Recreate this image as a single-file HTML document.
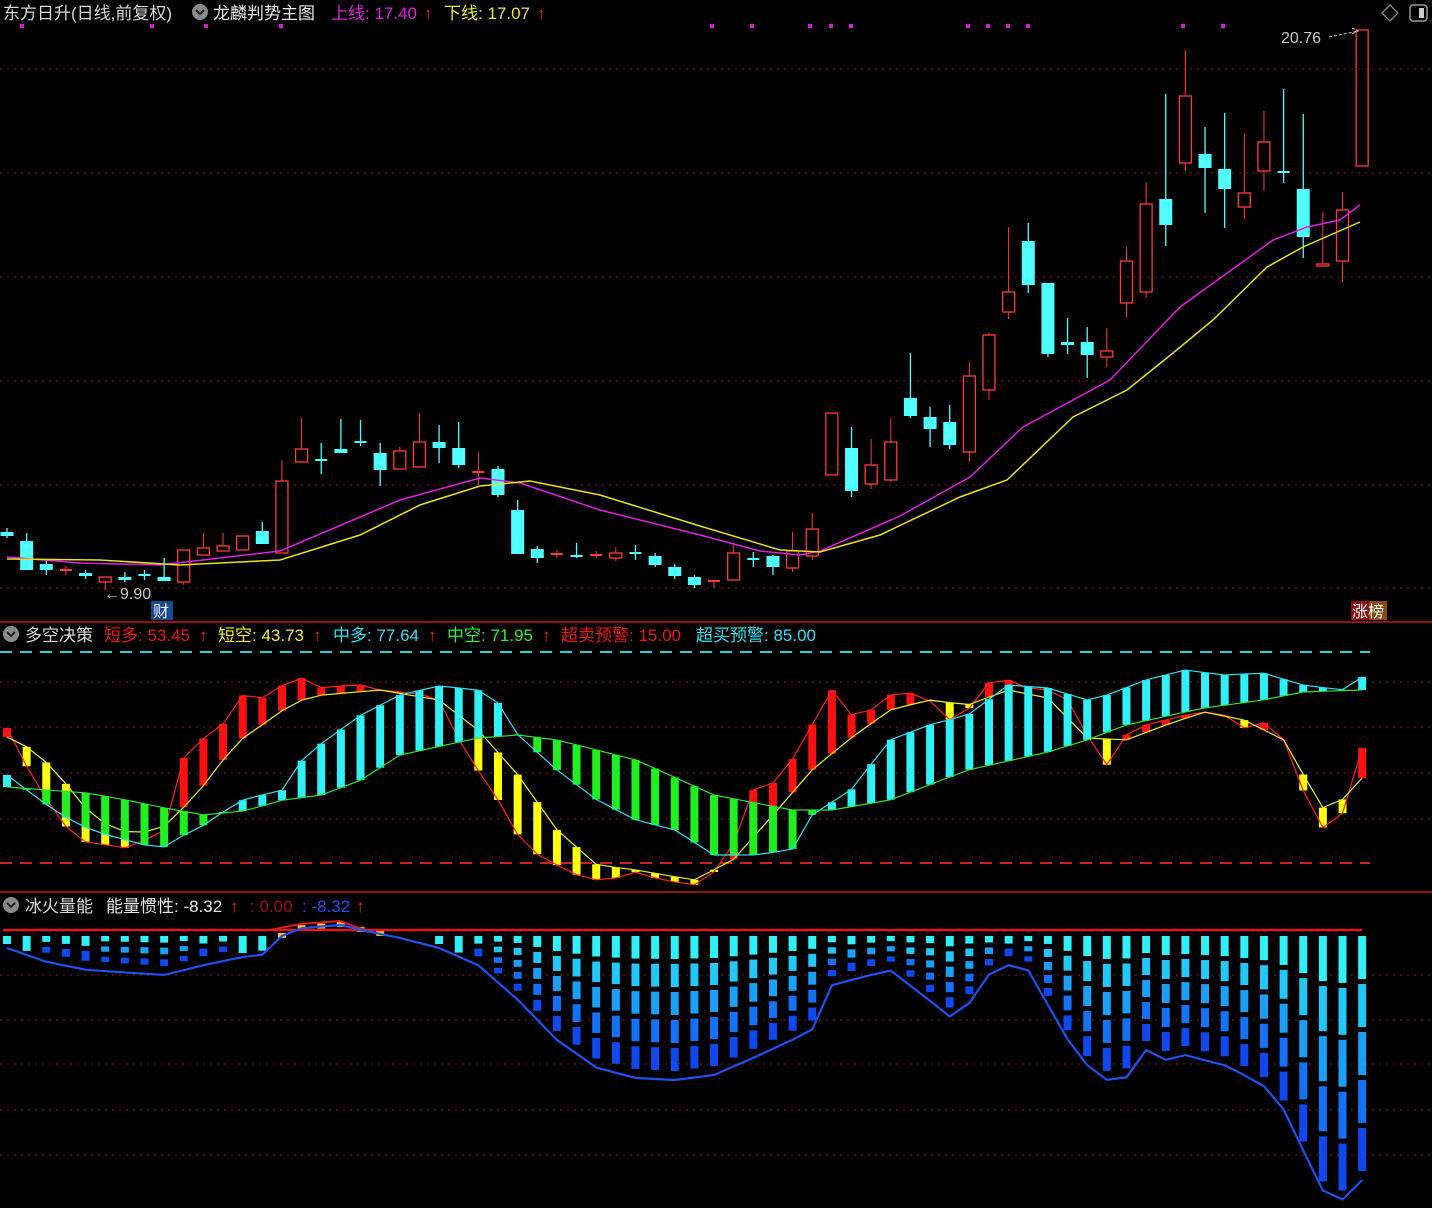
<!DOCTYPE html>
<html><head><meta charset="utf-8">
<style>
html,body{margin:0;padding:0;background:#000;width:1432px;height:1208px;overflow:hidden}
svg{display:block}
text{font-family:"Liberation Sans","Noto Sans CJK SC",sans-serif}
</style></head>
<body>
<svg id="s" width="1432" height="1208" xmlns="http://www.w3.org/2000/svg">
<rect width="1432" height="1208" fill="#000"/>
<g id="g"></g>
<text x="3" y="19" font-size="17" fill="#d8d8d8">东方日升(日线,前复权)</text>
<circle cx="200" cy="12" r="8" fill="#8a8a8a"/><path d="M196 10 L200 14 L204 10" stroke="#222" stroke-width="2" fill="none"/>
<text x="213" y="19" font-size="17" fill="#e8e8e8">龙麟判势主图</text>
<text x="331" y="19" font-size="17" fill="#e020e0">上线: 17.40</text>
<text x="424" y="19" font-size="17" fill="#ff2020">↑</text>
<text x="444" y="19" font-size="17" fill="#e8e840">下线: 17.07</text>
<text x="537" y="19" font-size="17" fill="#ff2020">↑</text>
<path d="M1390 5 L1398 13 L1390 21 L1382 13 Z" stroke="#888" stroke-width="1.3" fill="none"/>
<rect x="1410" y="5" width="17" height="16" rx="3" stroke="#999" stroke-width="1.5" fill="none"/><rect x="1419" y="8" width="5" height="10" fill="#ccc"/>
<text x="1281" y="43" font-size="16" fill="#c8c8c8">20.76</text>
<path d="M1329 37 L1358 31 M1352 28 L1358 31 L1352 34" stroke="#c8c8c8" stroke-width="1" fill="none" stroke-dasharray="3,2"/>
<text x="104" y="599" font-size="16" fill="#c8c8c8">←9.90</text>
<rect x="151" y="601" width="22" height="19" fill="#1a4a8a"/><text x="153" y="617" font-size="16" fill="#e8e8ff">财</text>
<rect x="1351" y="601" width="18" height="19" fill="#8a1010"/><rect x="1369" y="601" width="18" height="19" fill="#8a4a10"/>
<text x="1352" y="617" font-size="16" fill="#fff">涨榜</text>
<circle cx="11" cy="634" r="8" fill="#8a8a8a"/><path d="M7 632 L11 636 L15 632" stroke="#222" stroke-width="2" fill="none"/>
<text x="25" y="641" font-size="17" fill="#d8d8d8">多空决策</text>
<text x="104" y="641" font-size="17" fill="#e81818">短多: 53.45</text><text x="199" y="641" font-size="17" fill="#ff2020">↑</text>
<text x="218" y="641" font-size="17" fill="#f0f030">短空: 43.73</text><text x="313" y="641" font-size="17" fill="#ff2020">↑</text>
<text x="333" y="641" font-size="17" fill="#30e0f0">中多: 77.64</text><text x="428" y="641" font-size="17" fill="#ff2020">↑</text>
<text x="447" y="641" font-size="17" fill="#30f030">中空: 71.95</text><text x="542" y="641" font-size="17" fill="#ff2020">↑</text>
<text x="561" y="641" font-size="17" fill="#e81818">超卖预警: 15.00</text>
<text x="696" y="641" font-size="17" fill="#30e0f0">超买预警: 85.00</text>
<circle cx="11" cy="905" r="8" fill="#8a8a8a"/><path d="M7 903 L11 907 L15 903" stroke="#222" stroke-width="2" fill="none"/>
<text x="25" y="912" font-size="17" fill="#d8d8d8">冰火量能</text>
<text x="106" y="912" font-size="17" fill="#e8e8e8">能量惯性: -8.32</text>
<text x="230" y="912" font-size="17" fill="#ff2020">↑</text>
<text x="250" y="912" font-size="17" fill="#a01010">: 0.00</text>
<text x="302" y="912" font-size="17" fill="#2050f0">: -8.32</text>
<text x="356" y="912" font-size="17" fill="#ff2020">↑</text>
</svg>
<script>
(function(){
var g=document.getElementById('g'),h='';
function X(i){return 7+i*19.64;}
function interp(pts,x){for(var k=0;k<pts.length-1;k++){if(x<=pts[k+1][0]){var a=pts[k],b=pts[k+1];return a[1]+(b[1]-a[1])*(x-a[0])/(b[0]-a[0]);}}return pts[pts.length-1][1];}
function poly(pts,c,w){return '<polyline fill="none" stroke="'+c+'" stroke-width="'+(w||1)+'" points="'+pts.map(function(p){return p[0]+','+p[1]}).join(' ')+'"/>';}
[69,173,277,381,485,588].forEach(function(y){h+='<line x1="0" x2="1432" y1="'+y+'" y2="'+y+'" stroke="#8a1818" stroke-dasharray="2,5"/>';});
[682,727,773,819].forEach(function(y){h+='<line x1="0" x2="1432" y1="'+y+'" y2="'+y+'" stroke="#8a1818" stroke-dasharray="2,5"/>';});
[975,1020,1064,1110,1155].forEach(function(y){h+='<line x1="0" x2="1432" y1="'+y+'" y2="'+y+'" stroke="#8a1818" stroke-dasharray="2,5"/>';});
h+='<line x1="0" x2="1432" y1="622" y2="622" stroke="#c01818" stroke-width="1.5"/>';
h+='<line x1="0" x2="1432" y1="892" y2="892" stroke="#c01818" stroke-width="1.5"/>';
h+='<line x1="0" x2="1370" y1="652" y2="652" stroke="#30d0d0" stroke-width="2" stroke-dasharray="12,8"/>';
h+='<line x1="0" x2="1370" y1="863" y2="863" stroke="#d02020" stroke-width="2" stroke-dasharray="12,8"/>';
[22,152,206,281,712,752,810,831,851,968,988,1008,1028,1183,1223].forEach(function(x){h+='<rect x="'+(x-2)+'" y="24" width="4" height="4" fill="#d020d0"/>';});
var C=[[532,536,528,538,'c'],[541,570,533,570,'c'],[564,570,560,575,'c'],[570,570,566,575,'r'],[573,576,570,579,'c'],[582,577,577,590,'r'],[577,580,572,582,'c'],[575,575,570,580,'c'],[577,581,558,581,'c'],[582,550,550,585,'r'],
[555,548,533,555,'r'],[551,546,533,551,'r'],[550,536,536,550,'r'],[531,544,522,544,'c'],[553,481,460,553,'r'],[462,449,418,462,'r'],[460,460,443,474,'c'],[449,453,419,453,'c'],[442,443,420,446,'c'],[453,470,443,486,'c'],
[469,451,447,469,'r'],[467,442,413,467,'r'],[442,448,425,463,'c'],[448,465,422,468,'c'],[472,472,452,485,'r'],[469,495,466,497,'c'],[510,554,500,554,'c'],[549,558,546,563,'c'],[554,554,550,558,'r'],[556,556,543,558,'c'],
[555,555,551,558,'r'],[558,553,547,561,'r'],[553,553,545,560,'c'],[556,565,553,567,'c'],[567,576,564,579,'c'],[577,585,575,588,'c'],[581,581,581,588,'r'],[580,553,543,580,'r'],[559,559,552,567,'c'],[556,567,555,575,'c'],
[568,551,532,572,'r'],[556,529,513,560,'r'],[475,413,413,475,'r'],[448,491,427,497,'c'],[484,465,439,489,'r'],[480,442,418,482,'r'],[398,416,353,418,'c'],[417,429,407,447,'c'],[422,445,405,449,'c'],[452,376,362,462,'r'],
[390,335,333,400,'r'],[312,292,227,319,'r'],[241,285,223,293,'c'],[283,354,283,357,'c'],[342,345,318,354,'c'],[342,355,327,378,'c'],[357,351,328,367,'r'],[303,261,247,317,'r'],[292,204,182,298,'r'],[199,225,94,246,'c'],
[163,96,50,171,'r'],[154,168,127,213,'c'],[169,189,113,228,'c'],[207,193,134,219,'r'],[171,142,111,191,'r'],[172,172,89,183,'c'],[189,237,114,258,'c'],[266,264,212,266,'r'],[261,210,192,282,'r'],[166,30,30,166,'r']];
var MA1=[[7,557],[80,563],[160,565],[280,551],[400,500],[480,478],[520,483],[600,510],[700,535],[760,551],[800,555],[820,551],[900,516],[970,477],[1023,427],[1110,380],[1180,307],[1273,240],[1307,227],[1340,220],[1360,205]];
var MA2=[[7,559],[100,560],[180,565],[280,560],[360,535],[420,505],[480,486],[530,481],[600,495],[700,526],[780,550],[820,552],[880,535],[960,497],[1007,480],[1073,417],[1127,390],[1173,353],[1213,320],[1267,267],[1303,247],[1360,222]];
C.forEach(function(c,i){var x=X(i),o=c[0],cl=c[1],hi=c[2],lo=c[3],tp=Math.min(o,cl),bt=Math.max(o,cl),col;
 if(c[4]=='r'){col='#ff3a3a';
  h+='<line x1="'+x+'" x2="'+x+'" y1="'+hi+'" y2="'+tp+'" stroke="'+col+'"/><line x1="'+x+'" x2="'+x+'" y1="'+bt+'" y2="'+lo+'" stroke="'+col+'"/>';
  if(bt-tp<2)h+='<line x1="'+(x-6)+'" x2="'+(x+6)+'" y1="'+tp+'" y2="'+tp+'" stroke="'+col+'" stroke-width="2"/>';
  else h+='<rect x="'+(x-6)+'" y="'+tp+'" width="12" height="'+(bt-tp)+'" fill="none" stroke="'+col+'" stroke-width="1.3"/>';
 }else{col='#50ffff';
  h+='<line x1="'+x+'" x2="'+x+'" y1="'+hi+'" y2="'+lo+'" stroke="'+col+'" stroke-width="1.3"/>';
  if(bt-tp<2)h+='<line x1="'+(x-6)+'" x2="'+(x+6)+'" y1="'+tp+'" y2="'+tp+'" stroke="'+col+'" stroke-width="2"/>';
  else h+='<rect x="'+(x-6.5)+'" y="'+tp+'" width="13" height="'+(bt-tp)+'" fill="'+col+'"/>';}
});
h+=poly(MA1,'#e020e0',1.5)+poly(MA2,'#e8e020',1.5);
var A=[[7,728],[27,767],[47,800],[67,828],[87,843],[107,845],[126,848],[145,840],[165,830],[184,757],[204,738],[223,724],[243,695],[262,698],[283,685],[302,678],[322,688],[341,686],[361,685],[380,690],[400,692],[420,694],[439,700],[459,740],[478,770],[498,800],[518,835],[538,855],[557,865],[577,875],[597,880],[616,878],[636,872],[655,878],[675,882],[694,885],[714,872],[733,845],[753,790],[773,783],[792,760],[812,725],[832,690],[851,715],[871,710],[890,695],[910,693],[929,700],[949,720],[968,710],[988,683],[1008,680],[1028,688],[1048,690],[1068,700],[1087,735],[1107,765],[1126,735],[1146,725],[1166,720],[1185,715],[1204,712],[1224,715],[1244,728],[1263,722],[1284,740],[1303,790],[1322,828],[1342,815],[1362,748]];
var A2=[[7,737],[27,747],[47,763],[67,785],[87,810],[107,825],[126,832],[145,832],[165,826],[184,807],[204,785],[223,760],[243,738],[262,725],[283,710],[302,700],[322,695],[380,690],[439,700],[478,730],[518,775],[557,830],[597,865],[636,870],[694,880],[733,860],[773,815],[812,770],[851,738],[890,710],[929,700],[968,705],[1008,690],[1048,698],[1087,738],[1126,740],[1166,725],[1204,712],[1244,720],[1284,740],[1322,808],[1342,800],[1362,778]];
var B=[[7,775],[27,790],[47,805],[67,818],[87,828],[107,835],[126,840],[145,845],[165,847],[184,835],[204,825],[223,812],[243,800],[262,795],[283,790],[302,760],[322,743],[361,715],[400,695],[439,686],[478,690],[498,703],[518,735],[557,770],[597,800],[636,820],[675,830],[714,855],[753,855],[792,850],[812,815],[851,790],[890,740],[929,725],[968,715],[1008,685],[1048,688],[1087,700],[1107,695],[1146,680],[1185,670],[1224,675],[1263,673],[1303,685],[1342,690],[1362,677]];
var B2=[[7,787],[47,790],[87,793],[126,800],[165,808],[204,815],[243,811],[262,806],[283,800],[322,795],[361,780],[400,755],[478,738],[518,735],[557,740],[636,760],[714,795],[792,810],[832,810],[890,800],[968,770],[1048,752],[1087,740],[1126,725],[1204,708],[1263,700],[1303,692],[1362,690]];
var pa=[],pa2=[],pb=[],pb2=[],i,x;
for(i=0;i<70;i++){x=X(i);var a=interp(A,x),a2=interp(A2,x),b=interp(B,x),b2=interp(B2,x);pa.push([x,a]);pa2.push([x,a2]);pb.push([x,b]);pb2.push([x,b2]);
 h+='<rect x="'+(x-4)+'" y="'+Math.min(a,a2)+'" width="8" height="'+Math.max(1,Math.abs(a-a2))+'" fill="'+(a<a2?'#ff1010':'#ffff10')+'"/>';}
h+=poly(pa,'#ff2020',1.2)+poly(pa2,'#f0f020',1.2);
for(i=0;i<70;i++){x=X(i);var bb=pb[i][1],bb2=pb2[i][1];
 h+='<rect x="'+(x-4)+'" y="'+Math.min(bb,bb2)+'" width="8" height="'+Math.max(1,Math.abs(bb-bb2))+'" fill="'+(bb<bb2?'#30f0f8':'#20f020')+'"/>';}
h+=poly(pb,'#30e0f0',1.2)+poly(pb2,'#30e030',1.2);
var L=[[7,948],[47,962],[87,970],[165,975],[204,965],[243,957],[262,955],[283,935],[302,928],[341,925],[361,930],[400,938],[439,948],[478,965],[518,1000],[557,1040],[597,1068],[636,1078],[675,1080],[714,1075],[753,1058],[792,1040],[812,1030],[832,985],[871,975],[890,970],[929,1000],[949,1017],[968,1005],[988,975],[1008,965],[1028,970],[1048,1005],[1068,1040],[1087,1065],[1107,1080],[1126,1078],[1146,1050],[1166,1060],[1185,1055],[1204,1060],[1224,1065],[1244,1075],[1263,1085],[1284,1110],[1303,1150],[1322,1190],[1342,1200],[1362,1180]];
var cols=['#30f0f8','#22c8f8','#1aa0f8','#1472f8','#1048f0'];
var pl=[];
for(i=0;i<70;i++){x=X(i);var y=interp(L,x);pl.push([x,y]);
 if(y<936){h+='<rect x="'+(x-4)+'" y="'+(y-3)+'" width="8" height="5" fill="#ffc020"/>';continue;}
 var y0=936,len=y-4-y0;if(len<3)continue;
 var n=Math.max(1,Math.min(5,Math.round(len/12)));var seg=len/n;
 for(var k=0;k<n;k++){var cc=n==1?cols[0]:cols[Math.round(k*4/(n-1))];
  h+='<rect x="'+(x-4)+'" y="'+(y0+k*seg)+'" width="8" height="'+Math.max(1,seg-(n>1?5:0))+'" fill="'+cc+'"/>';}
}
h+='<line x1="3" x2="1362" y1="930" y2="930" stroke="#e01818" stroke-width="2.5"/>';
h+='<polyline fill="none" stroke="#e01818" stroke-width="2" points="270,930 300,924 340,921 365,930"/>';
h+=poly(pl,'#2050f0',2.2);
g.innerHTML=h;
})();
</script>
</body></html>
